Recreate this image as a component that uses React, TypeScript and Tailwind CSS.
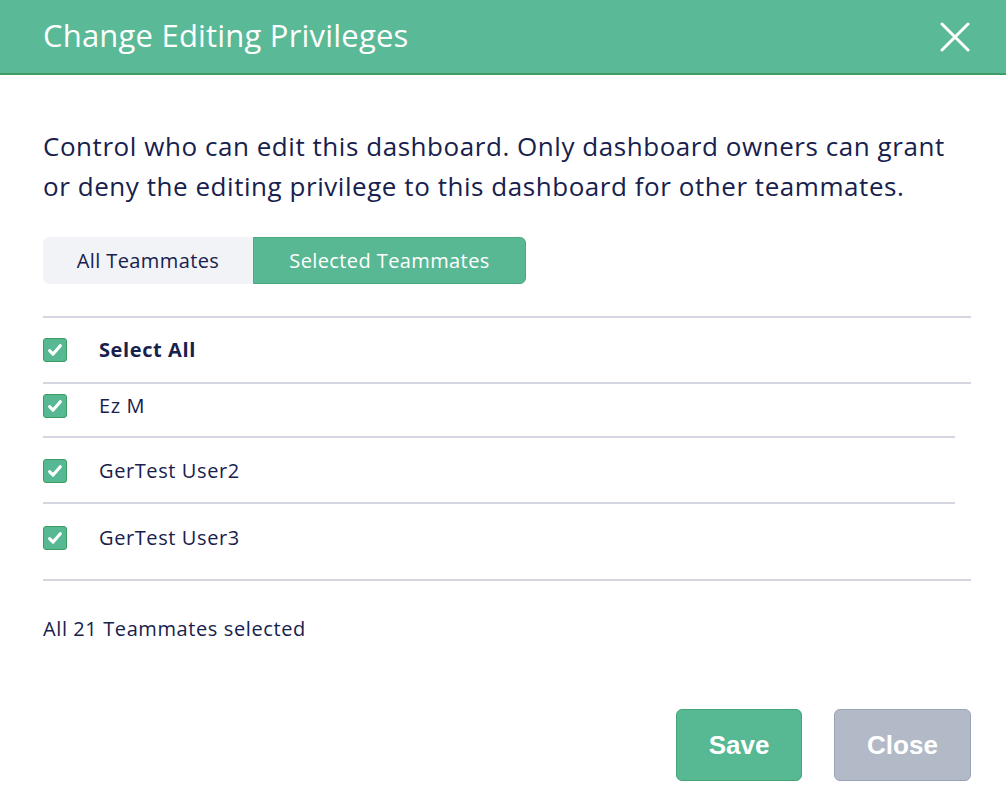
import React from 'react';

const navy = 'text-[#17214d]';

const Check: React.FC = () => (
  <div className="w-6 h-6 rounded-[3px] bg-[#57b894] border border-[#3e9c62] flex items-center justify-center shrink-0">
    <svg className="w-[18px] h-[18px]" viewBox="0 0 16 16" fill="none" stroke="white" strokeWidth={2.8} strokeLinecap="round" strokeLinejoin="round">
      <path d="M3.2 8.6l3.1 3 6.4-7.4" />
    </svg>
  </div>
);

const members = ['Ez M', 'GerTest User2', 'GerTest User3'];

const App: React.FC = () => {
  return (
    <div className="w-[1006px] h-[798px] bg-white overflow-hidden" style={{ fontFamily: '"Open Sans", "Liberation Sans", Arial, sans-serif' }}>
      <div className="h-[75px] bg-[#5ab996] border-b-2 border-[#409d66] flex items-center justify-between pl-[43px] pr-[36px]">
        <h1 className="text-white text-[31px] leading-none tracking-[0.2px] pb-[2px]">Change Editing Privileges</h1>
        <svg className="w-[30px] h-[30px]" viewBox="0 0 30 30" fill="none" stroke="white" strokeWidth={3} strokeLinecap="round">
          <path d="M2 2l26 26M28 2L2 28" />
        </svg>
      </div>

      <div className="pl-[43px] pr-[35px] pt-[51px]">
        <p className={`${navy} max-w-[918px] text-[26px] leading-[40px] tracking-[0.55px]`}>
          Control who can edit this dashboard. Only dashboard owners can grant or deny the editing privilege to this dashboard for other teammates.
        </p>

        <div className="mt-[31px] flex w-[483px] h-[47px] text-[20px] tracking-[0.4px]">
          <div className={`w-[210px] bg-[#f2f3f7] rounded-l-md flex items-center justify-center ${navy}`}>All Teammates</div>
          <div className="flex-1 bg-[#58b894] border border-[#4aa97a] rounded-r-md flex items-center justify-center text-white">Selected Teammates</div>
        </div>

        <div className="mt-[32px] border-t-2 border-[#d4d7e1]">
          <div className="h-[64px] flex items-center gap-[32px]">
            <Check />
            <span className={`${navy} text-[20px] font-bold tracking-[0.6px]`}>Select All</span>
          </div>
          <div className="border-t-2 border-[#d4d7e1] pr-[16px]">
            {members.map((m, i) => (
              <div key={m} className={`${i > 0 ? 'border-t-2 border-[#d4d7e1]' : ''} ${i === 0 ? 'h-[52px] pt-[10px]' : i === 1 ? 'h-[66px] pt-[21px]' : 'h-[77px] pt-[22px]'} flex items-start gap-[32px]`}>
                <Check />
                <span className={`${navy} text-[20px] leading-6 tracking-[0.6px]`}>{m}</span>
              </div>
            ))}
          </div>
          <div className="border-t-2 border-[#d4d7e1]"></div>
        </div>

        <p className={`${navy} text-[20px] leading-7 tracking-[0.6px] mt-[34px]`}>All 21 Teammates selected</p>

        <div className="mt-[66px] flex justify-end gap-[32px]" style={{ fontFamily: '"Liberation Sans", Arial, sans-serif' }}>
          <button className="w-[126px] h-[72px] rounded-md bg-[#57b894] border border-[#45a674] text-white text-[26px] font-bold">Save</button>
          <button className="w-[137px] h-[72px] rounded-md bg-[#b2bac7] border border-[#98a3b6] text-white text-[26px] font-bold">Close</button>
        </div>
      </div>
    </div>
  );
};

export default App;
